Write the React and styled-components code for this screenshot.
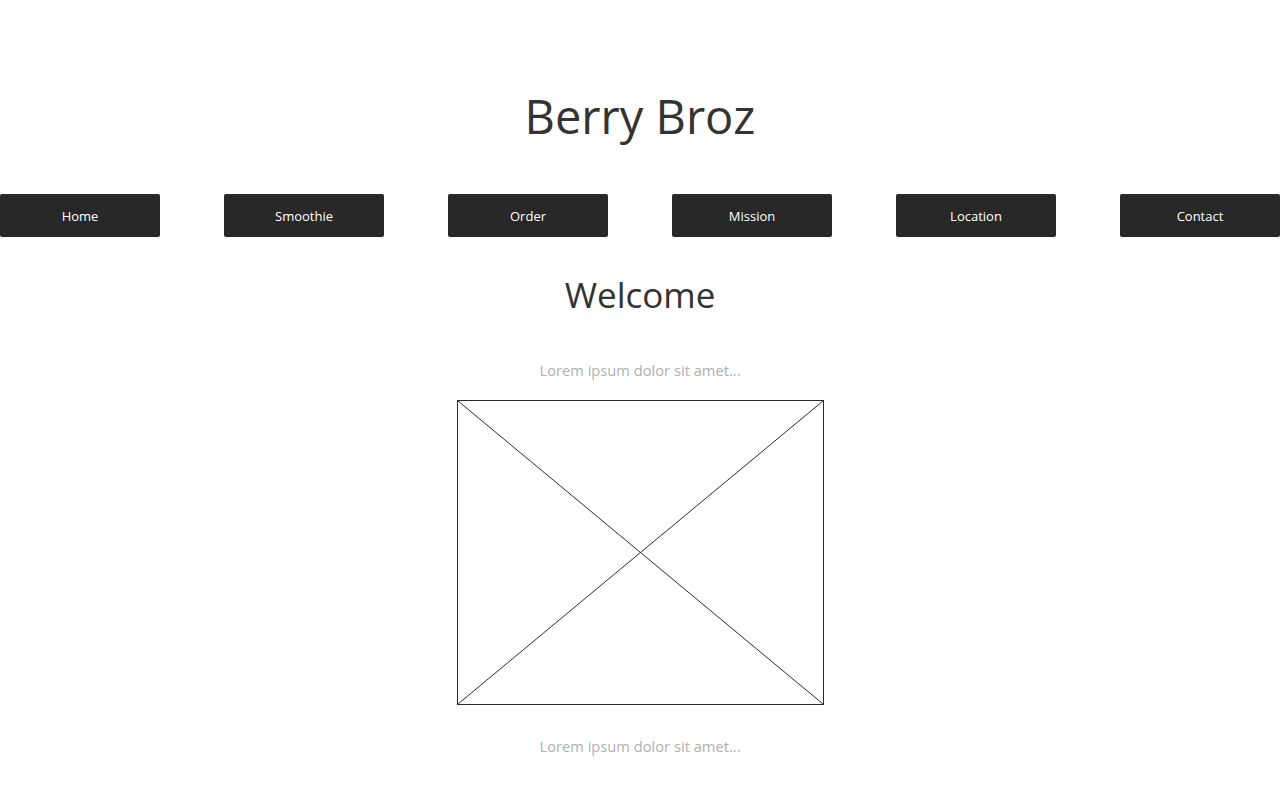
import styled, { createGlobalStyle } from 'styled-components';

const GlobalStyle = createGlobalStyle`
  body {
    margin: 0;
    background: #fff;
    font-family: "Open Sans", "Noto Sans", sans-serif;
  }
`;

const links = ['Home', 'Smoothie', 'Order', 'Mission', 'Location', 'Contact'];

const App = () => {
  return (
    <>
      <GlobalStyle />
      <Page>
        <Header>
          <Title>Berry Broz</Title>
        </Header>
        <Nav>
          {links.map((label) => (
            <NavButton key={label} href="#">
              {label}
            </NavButton>
          ))}
        </Nav>
        <Main>
          <Heading>Welcome</Heading>
          <Lorem>Lorem ipsum dolor sit amet...</Lorem>
          <Placeholder>
            <svg width="100%" height="100%" viewBox="0 0 100 100" preserveAspectRatio="none">
              <line x1="0" y1="0" x2="100" y2="100" stroke="#2b2b2b" strokeWidth="1" vectorEffect="non-scaling-stroke" />
              <line x1="100" y1="0" x2="0" y2="100" stroke="#2b2b2b" strokeWidth="1" vectorEffect="non-scaling-stroke" />
            </svg>
          </Placeholder>
          <Lorem bottom>Lorem ipsum dolor sit amet...</Lorem>
        </Main>
      </Page>
    </>
  );
};

const Page = styled.div`
  width: 1280px;
  min-height: 800px;
`;

const Header = styled.header`
  padding-top: 85px;
`;

const Title = styled.h1`
  margin: 0;
  font-size: 47px;
  line-height: 62px;
  font-weight: 400;
  color: #333;
  text-align: center;
`;

const Nav = styled.nav`
  display: flex;
  justify-content: space-between;
  margin-top: 47px;
`;

const NavButton = styled.a`
  display: block;
  width: 160px;
  height: 42px;
  padding-top: 1px;
  line-height: 43px;
  background-color: #282828;
  border-radius: 2px;
  color: #fff;
  font-size: 13px;
  text-align: center;
  text-decoration: none;
  cursor: pointer;

  &:hover {
    background-color: #3a3a3a;
  }
`;

const Main = styled.main`
  display: flex;
  flex-direction: column;
  align-items: center;
  padding-top: 34px;
`;

const Heading = styled.h2`
  margin: 0;
  font-size: 35px;
  line-height: 48px;
  font-weight: 400;
  color: #333;
`;

const Lorem = styled.p`
  margin: ${(props) => (props.bottom ? '29px 0 0' : '39px 0 0')};
  font-size: 14.7px;
  line-height: 24px;
  color: #b0b0b0;
`;

const Placeholder = styled.div`
  margin-top: 18px;
  width: 367px;
  height: 305px;
  box-sizing: border-box;
  border: 1px solid #2b2b2b;

  svg {
    display: block;
  }
`;

export default App;
